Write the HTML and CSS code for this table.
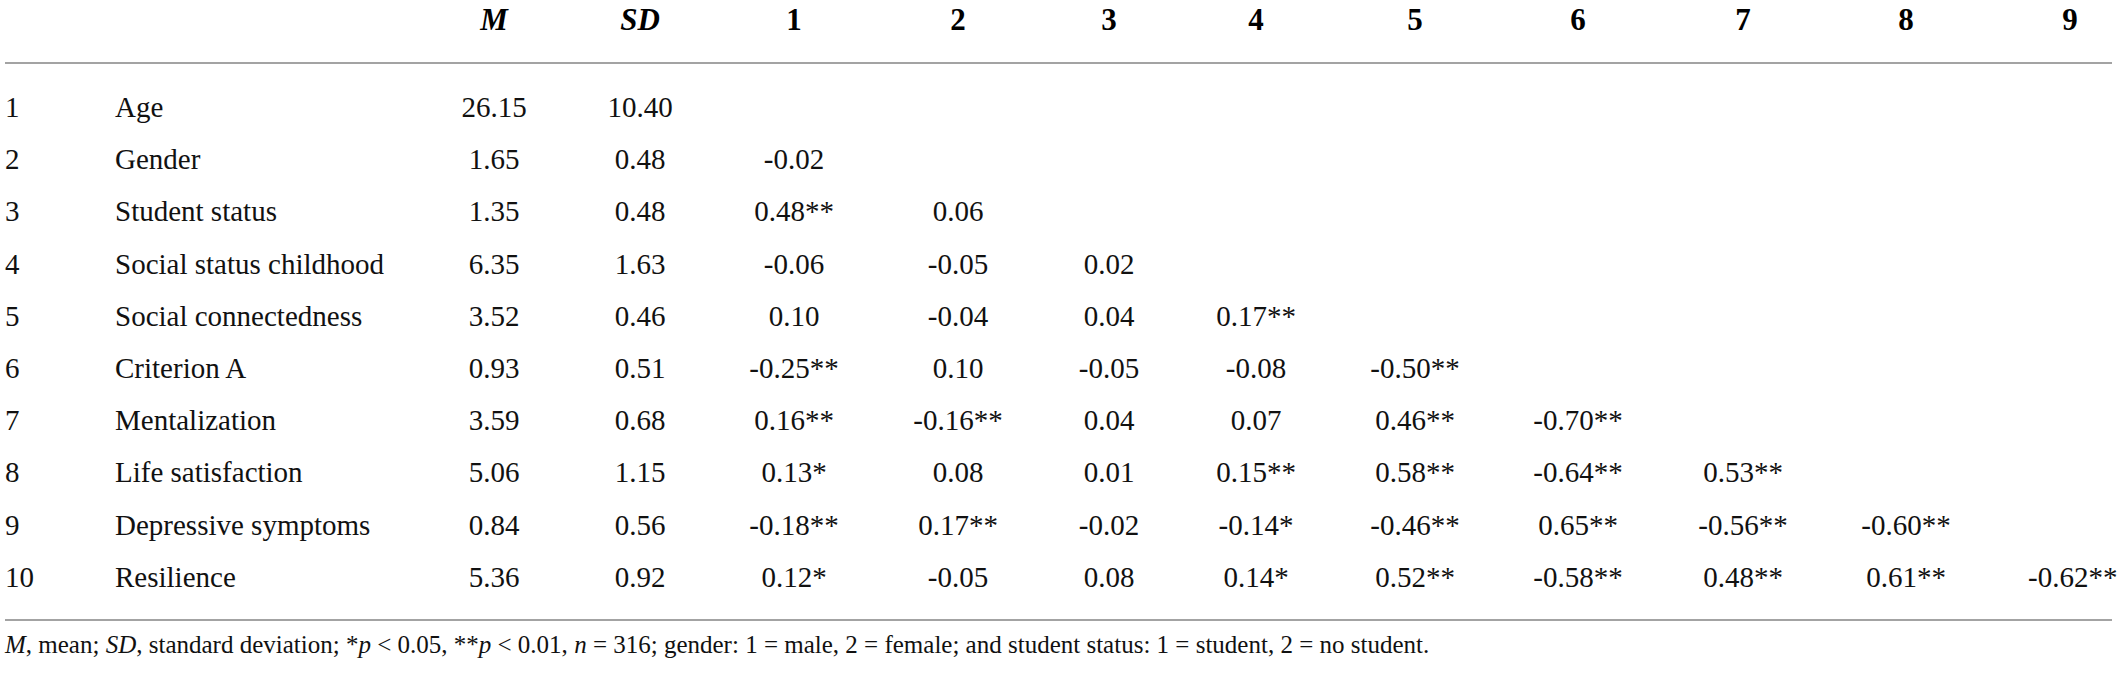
FILE: index.html
```html
<!DOCTYPE html>
<html lang="en">
<head>
<meta charset="utf-8">
<title>Correlation table</title>
<link rel="stylesheet" href="styles.css">
</head>
<body>
<div class="wrap">
<table class="corr">
  <colgroup>
    <col class="c-num"><col class="c-label">
    <col class="c-m"><col class="c-sd">
    <col class="c1"><col class="c2"><col class="c3"><col class="c4"><col class="c5">
    <col class="c6"><col class="c7"><col class="c8"><col class="c9">
  </colgroup>
  <thead>
    <tr>
      <th></th><th></th>
      <th><em>M</em></th><th><em>SD</em></th>
      <th>1</th><th>2</th><th>3</th><th>4</th><th>5</th><th>6</th><th>7</th><th>8</th><th class="last">9</th>
    </tr>
  </thead>
  <tbody>
    <tr class="first"><td>1</td><td>Age</td><td>26.15</td><td>10.40</td><td></td><td></td><td></td><td></td><td></td><td></td><td></td><td></td><td class="last"></td></tr>
    <tr><td>2</td><td>Gender</td><td>1.65</td><td>0.48</td><td>-0.02</td><td></td><td></td><td></td><td></td><td></td><td></td><td></td><td class="last"></td></tr>
    <tr><td>3</td><td>Student status</td><td>1.35</td><td>0.48</td><td>0.48**</td><td>0.06</td><td></td><td></td><td></td><td></td><td></td><td></td><td class="last"></td></tr>
    <tr><td>4</td><td>Social status childhood</td><td>6.35</td><td>1.63</td><td>-0.06</td><td>-0.05</td><td>0.02</td><td></td><td></td><td></td><td></td><td></td><td class="last"></td></tr>
    <tr><td>5</td><td>Social connectedness</td><td>3.52</td><td>0.46</td><td>0.10</td><td>-0.04</td><td>0.04</td><td>0.17**</td><td></td><td></td><td></td><td></td><td class="last"></td></tr>
    <tr><td>6</td><td>Criterion A</td><td>0.93</td><td>0.51</td><td>-0.25**</td><td>0.10</td><td>-0.05</td><td>-0.08</td><td>-0.50**</td><td></td><td></td><td></td><td class="last"></td></tr>
    <tr><td>7</td><td>Mentalization</td><td>3.59</td><td>0.68</td><td>0.16**</td><td>-0.16**</td><td>0.04</td><td>0.07</td><td>0.46**</td><td>-0.70**</td><td></td><td></td><td class="last"></td></tr>
    <tr><td>8</td><td>Life satisfaction</td><td>5.06</td><td>1.15</td><td>0.13*</td><td>0.08</td><td>0.01</td><td>0.15**</td><td>0.58**</td><td>-0.64**</td><td>0.53**</td><td></td><td class="last"></td></tr>
    <tr><td>9</td><td>Depressive symptoms</td><td>0.84</td><td>0.56</td><td>-0.18**</td><td>0.17**</td><td>-0.02</td><td>-0.14*</td><td>-0.46**</td><td>0.65**</td><td>-0.56**</td><td>-0.60**</td><td class="last"></td></tr>
    <tr class="end"><td>10</td><td>Resilience</td><td>5.36</td><td>0.92</td><td>0.12*</td><td>-0.05</td><td>0.08</td><td>0.14*</td><td>0.52**</td><td>-0.58**</td><td>0.48**</td><td>0.61**</td><td class="last">-0.62**</td></tr>
  </tbody>
</table>
<p class="note"><em>M</em>, mean; <em>SD</em>, standard deviation; *<em>p</em> &lt; 0.05, **<em>p</em> &lt; 0.01, <em>n</em> = 316; gender: 1 = male, 2 = female; and student status: 1 = student, 2 = no student.</p>
</div>
</body>
</html>
```
FILE: styles.css
```css
html, body {
  margin: 0;
  padding: 0;
  background: #ffffff;
}

.wrap {
  padding-left: 5px;
  font-family: "Liberation Serif", "Times New Roman", serif;
  color: #111111;
}

.corr {
  table-layout: fixed;
  border-collapse: separate;
  border-spacing: 0;
  width: 2107px;
}

.c-num { width: 110px; }
.c-label { width: 306px; }
.c-m { width: 146px; }
.c-sd { width: 146px; }
.c1 { width: 162px; }
.c2 { width: 166px; }
.c3 { width: 136px; }
.c4 { width: 158px; }
.c5 { width: 160px; }
.c6 { width: 166px; }
.c7 { width: 164px; }
.c8 { width: 162px; }
.c9 { width: 125px; }

.corr th {
  font-size: 31px;
  font-weight: bold;
  line-height: 40px;
  padding: 0 0 22px 0;
  text-align: center;
  vertical-align: top;
  color: #000000;
  border-bottom: 2px solid #a3a3a3;
  white-space: nowrap;
}

.corr th em {
  font-style: italic;
}

.corr td {
  font-size: 29px;
  line-height: 52.2px;
  padding: 0;
  text-align: center;
  white-space: nowrap;
}

.corr td:nth-child(1),
.corr td:nth-child(2) {
  text-align: left;
}

.corr .last {
  padding-left: 41px;
}

.corr tr.first td {
  padding-top: 17px;
}

.corr tr.end td {
  padding-bottom: 16px;
  border-bottom: 2px solid #a3a3a3;
}

.note {
  margin: 0;
  padding-top: 9px;
  font-size: 25px;
  line-height: 30px;
  white-space: nowrap;
}
```
